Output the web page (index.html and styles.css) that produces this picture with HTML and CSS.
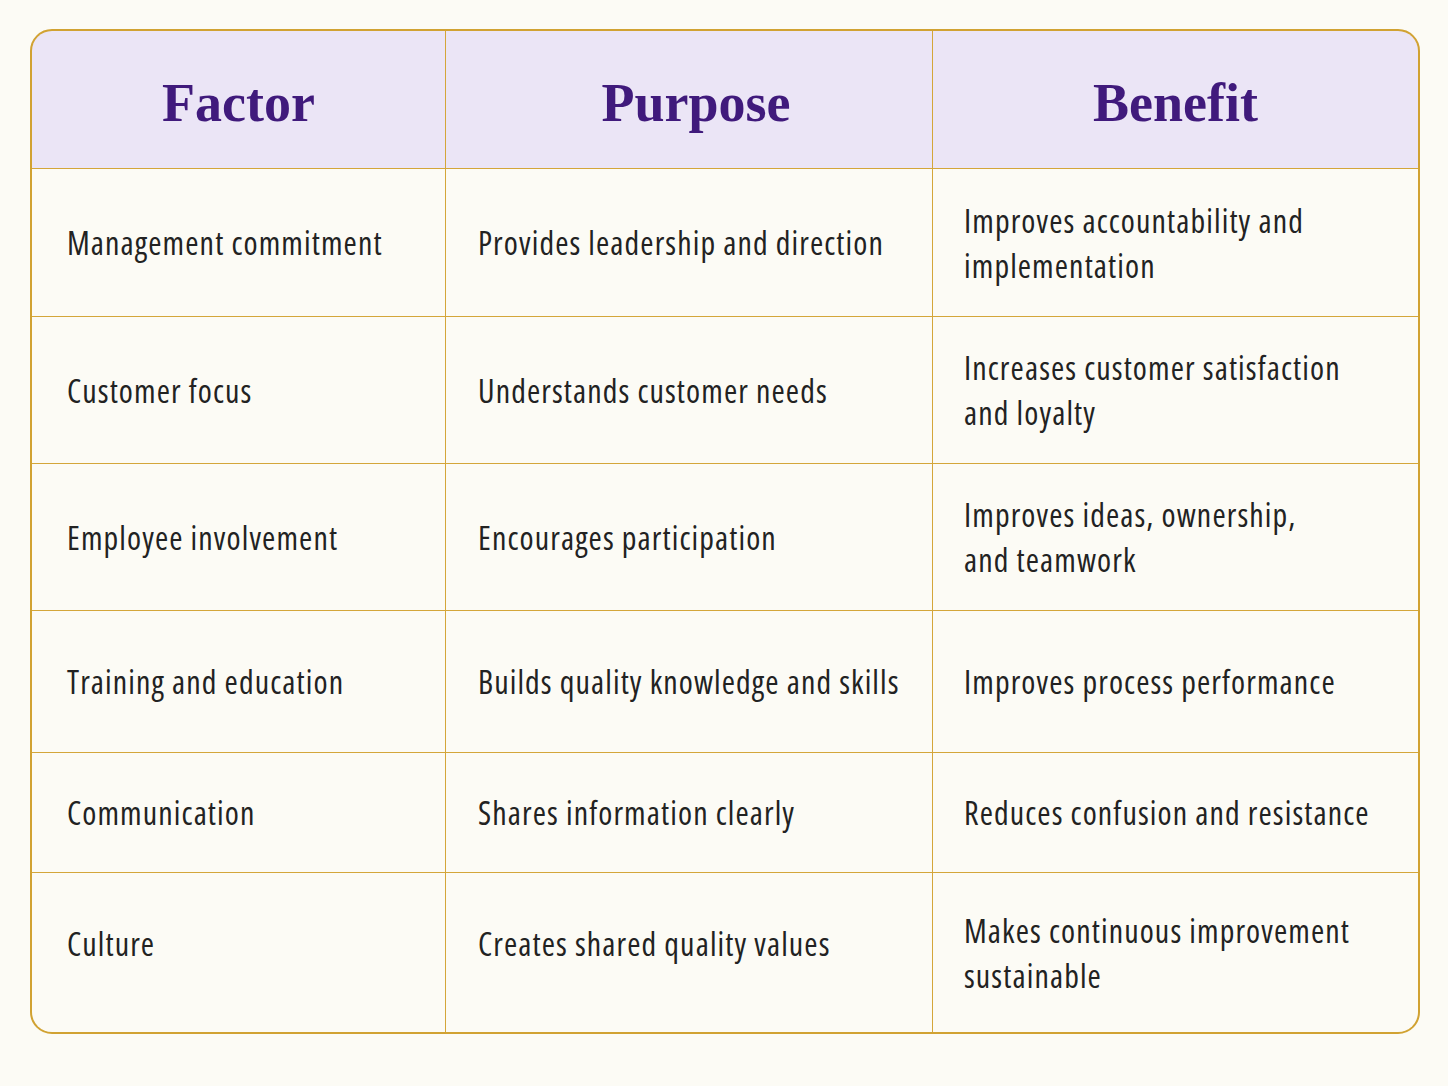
FILE: index.html
```html
<!DOCTYPE html>
<html lang="en">
<head>
<meta charset="utf-8">
<title>Quality factors</title>
<link rel="stylesheet" href="styles.css">
</head>
<body>
<div class="table">
  <div class="th">Factor</div>
  <div class="th th-mid">Purpose</div>
  <div class="th">Benefit</div>

  <div class="td">Management commitment</div>
  <div class="td">Provides leadership and direction</div>
  <div class="td">Improves accountability and<br>implementation</div>

  <div class="td">Customer focus</div>
  <div class="td">Understands customer needs</div>
  <div class="td">Increases customer satisfaction<br>and loyalty</div>

  <div class="td">Employee involvement</div>
  <div class="td">Encourages participation</div>
  <div class="td">Improves ideas, ownership,<br>and teamwork</div>

  <div class="td">Training and education</div>
  <div class="td">Builds quality knowledge and skills</div>
  <div class="td">Improves process performance</div>

  <div class="td">Communication</div>
  <div class="td">Shares information clearly</div>
  <div class="td">Reduces confusion and resistance</div>

  <div class="td td-raised">Culture</div>
  <div class="td td-raised">Creates shared quality values</div>
  <div class="td">Makes continuous improvement<br>sustainable</div>
</div>
</body>
</html>
```
FILE: styles.css
```css
html, body {
  margin: 0;
  background: #fcfbf5;
}
body {
  padding: 29px 0 0 30px;
}
.table {
  width: 1390px;
  box-sizing: border-box;
  display: grid;
  grid-template-columns: 413px 486px 485px;
  grid-template-rows: 137px 147px 146px 146px 141px 119px 159px;
  gap: 1px;
  background: #d4a63a;
  border: 2px solid #d1a232;
  border-radius: 22px;
  overflow: hidden;
}
.th {
  background: #ebe5f6;
  display: flex;
  align-items: center;
  justify-content: center;
  padding-top: 6px;
  font-family: "Liberation Serif", "Times New Roman", serif;
  font-weight: 700;
  font-size: 54px;
  color: #401a7c;
}
.th-mid {
  padding-left: 14px;
}
.td {
  background: #fcfbf5;
  display: flex;
  align-items: center;
  padding: 0 10px 0 32px;
  font-family: "Open Sans", "Noto Sans", sans-serif;
  font-stretch: 75%;
  font-weight: 400;
  font-size: 32px;
  letter-spacing: 1.1px;
  line-height: 45px;
  color: #222222;
  white-space: nowrap;
}
.td:nth-child(3n+1) {
  padding-left: 35px;
}
.td:nth-child(3n) {
  padding-left: 31px;
}
.td-raised {
  padding-bottom: 18px;
}
```
